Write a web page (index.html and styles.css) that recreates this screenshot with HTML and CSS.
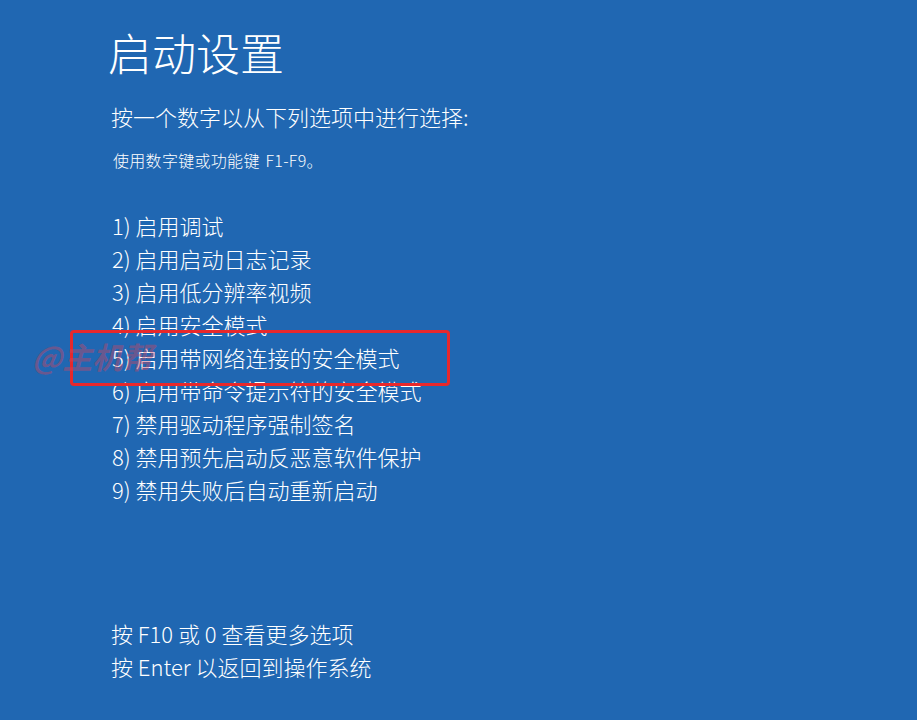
FILE: index.html
```html
<!DOCTYPE html>
<html lang="zh-CN">
<head>
<meta charset="utf-8">
<title>启动设置</title>
<link rel="stylesheet" href="styles.css">
</head>
<body>
<main class="screen">
  <h1 class="title">启动设置</h1>
  <p class="prompt">按一个数字以从下列选项中进行选择:</p>
  <p class="hint">使用数字键或功能键 F1-F9。</p>
  <ol class="options">
    <li>1) 启用调试</li>
    <li>2) 启用启动日志记录</li>
    <li>3) 启用低分辨率视频</li>
    <li>4) 启用安全模式</li>
    <li>5) 启用带网络连接的安全模式</li>
    <li>6) 启用带命令提示符的安全模式</li>
    <li>7) 禁用驱动程序强制签名</li>
    <li>8) 禁用预先启动反恶意软件保护</li>
    <li>9) 禁用失败后自动重新启动</li>
  </ol>
  <div class="footer">
    <p>按 F10 或 0 查看更多选项</p>
    <p>按 Enter 以返回到操作系统</p>
  </div>
  <div class="highlight"></div>
  <div class="watermark">@主机帮</div>
</main>
</body>
</html>
```

FILE: styles.css
```css
html, body {
  margin: 0;
  padding: 0;
  height: 100%;
}
body {
  background: #2067b2;
  color: #ffffff;
  font-family: "Noto Sans CJK SC", "Noto Sans", sans-serif;
  overflow: hidden;
}
.screen {
  position: relative;
  height: 720px;
  padding: 26px 0 0 108px;
  box-sizing: border-box;
}
.title {
  margin: 0;
  font-size: 44px;
  line-height: 52px;
  font-weight: 300;
}
.prompt {
  margin: 22px 0 0 3px;
  font-size: 22px;
  line-height: 33px;
  font-weight: 300;
}
.hint {
  margin: 17px 0 0 5px;
  font-size: 16px;
  line-height: 20px;
  font-weight: 300;
  word-spacing: 2px;
  letter-spacing: 0.3px;
}
.options {
  list-style: none;
  margin: 39px 0 0 4px;
  padding: 0;
  font-size: 22px;
  line-height: 33px;
  font-weight: 300;
}
.footer {
  margin: 111px 0 0 3px;
  font-size: 22px;
  line-height: 33px;
  font-weight: 300;
}
.footer p {
  margin: 0;
}
.highlight {
  position: absolute;
  left: 70px;
  top: 330px;
  width: 380px;
  height: 56px;
  box-sizing: border-box;
  border: 3px solid #e8282b;
  border-radius: 4px;
}
.watermark {
  position: absolute;
  left: 32px;
  top: 336px;
  font-size: 30px;
  line-height: 40px;
  font-weight: 700;
  font-style: italic;
  color: rgba(200, 70, 100, 0.45);
}
```
